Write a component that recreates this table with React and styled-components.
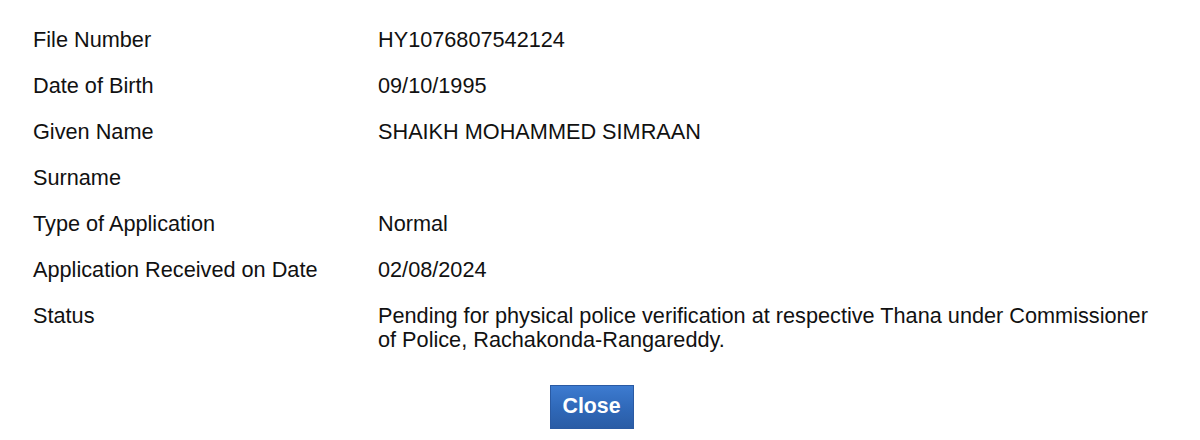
import styled, { createGlobalStyle } from 'styled-components';

const GlobalStyle = createGlobalStyle`
  body {
    margin: 0;
    background: #ffffff;
    font-family: "Liberation Sans", Arial, Helvetica, sans-serif;
  }
`;

const rows = [
  { label: 'File Number', value: 'HY1076807542124' },
  { label: 'Date of Birth', value: '09/10/1995' },
  { label: 'Given Name', value: 'SHAIKH MOHAMMED SIMRAAN' },
  { label: 'Surname', value: '' },
  { label: 'Type of Application', value: 'Normal' },
  { label: 'Application Received on Date', value: '02/08/2024' },
  {
    label: 'Status',
    value:
      'Pending for physical police verification at respective Thana under Commissioner of Police, Rachakonda-Rangareddy.',
  },
];

const App = () => {
  return (
    <>
      <GlobalStyle />
      <Panel>
        <Details>
          {rows.map((row) => (
            <Row key={row.label}>
              <Label>{row.label}</Label>
              <Value>{row.value}</Value>
            </Row>
          ))}
        </Details>
        <Actions>
          <CloseButton type="button">Close</CloseButton>
        </Actions>
      </Panel>
    </>
  );
};

const Panel = styled.div`
  width: 1139px;
  margin-left: 22px;
  padding-top: 17px;
  display: flex;
  flex-direction: column;
`;

const Details = styled.div`
  display: flex;
  flex-direction: column;
`;

const Row = styled.div`
  display: grid;
  grid-template-columns: 345px 1fr;
  font-size: 21.7px;
  line-height: 24.5px;
  color: #111111;
`;

const Label = styled.div`
  padding: 10.75px 11px;
`;

const Value = styled.div`
  padding: 10.75px 0 10.75px 11px;
  min-height: 24.5px;
`;

const Actions = styled.div`
  display: flex;
  justify-content: center;
  padding-top: 21px;
`;

const CloseButton = styled.button`
  font-family: "Liberation Sans", Arial, Helvetica, sans-serif;
  font-size: 21.3px;
  font-weight: bold;
  line-height: 24.5px;
  color: #ffffff;
  padding: 8.75px 12px;
  border: 1px solid #2a5aa3;
  border-radius: 0;
  background: linear-gradient(to bottom, #3d7bd0 0%, #2f68b8 55%, #2a5ca5 100%);
  cursor: pointer;
`;

export default App;
